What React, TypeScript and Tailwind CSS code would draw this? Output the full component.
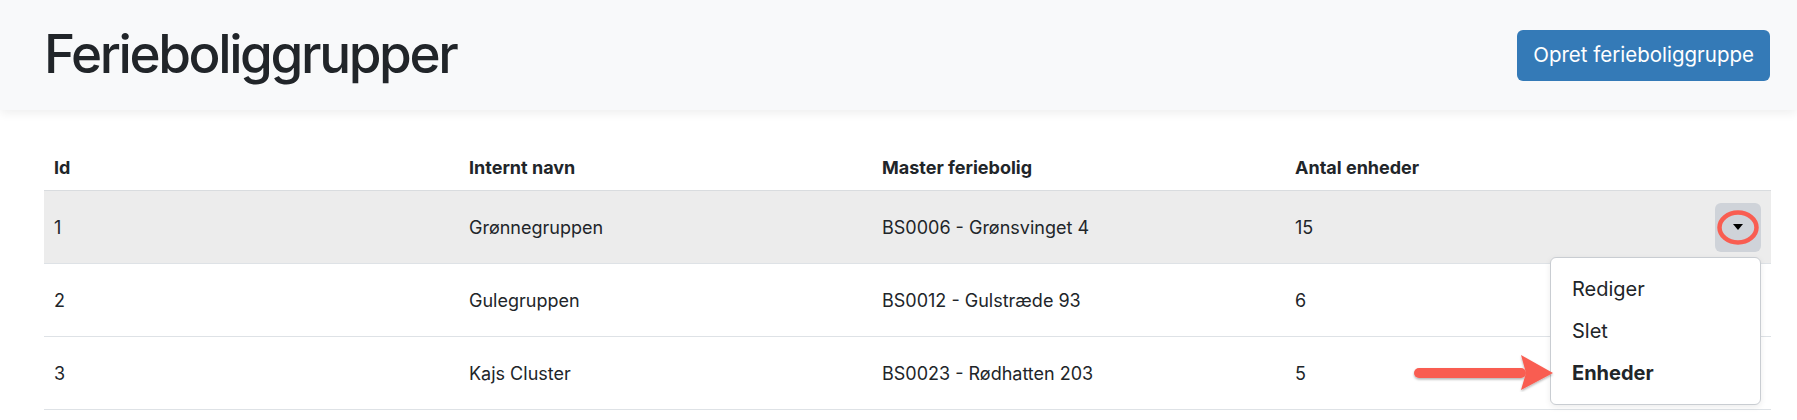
import React from "react";

const rows = [
  { id: 1, name: "Grønnegruppen", master: "BS0006 - Grønsvinget 4", count: 15 },
  { id: 2, name: "Gulegruppen", master: "BS0012 - Gulstræde 93", count: 6 },
  { id: 3, name: "Kajs Cluster", master: "BS0023 - Rødhatten 203", count: 5 },
];

const cols = "grid grid-cols-[415px_413px_413px_1fr_64px]";

function ActionMenu() {
  return (
    <div className="relative">
      <button className="relative flex h-[49px] w-[46px] items-center justify-center rounded-[6px] bg-[#cfd3d9]">
        <span className="h-0 w-0 border-x-[5px] border-t-[6px] border-x-transparent border-t-black" />
        {/* annotation ring */}
        <svg
          className="absolute left-[2px] top-[7px]"
          width="42"
          height="35"
          viewBox="0 0 42 35"
        >
          <ellipse cx="21" cy="17.5" rx="18.5" ry="15" fill="none" stroke="#f95d51" strokeWidth="4.5" />
        </svg>
      </button>
      <div className="absolute right-0 top-[54px] z-10 w-[211px] rounded-[6px] border border-[#c9cdd2] bg-white py-[10px] text-[20px] shadow-[0_2px_6px_rgba(0,0,0,0.08)]">
        <div className="flex h-[42px] items-center px-[21px]">Rediger</div>
        <div className="flex h-[42px] items-center px-[21px]">Slet</div>
        <div className="flex h-[42px] items-center px-[21px] font-bold">Enheder</div>
      </div>
    </div>
  );
}

export default function App() {
  return (
    <div className="relative min-h-[420px] overflow-hidden bg-white font-['Inter','Liberation_Sans',sans-serif] text-[#212529]">
      <header className="relative z-[1] flex h-[110px] items-center justify-between bg-[#f8f9fa] pl-[44px] pr-[27px] shadow-[0_3px_10px_rgba(0,0,0,0.07)]">
        <h1 className="text-[53px] font-medium tracking-[-0.045em]">Ferieboliggrupper</h1>
        <button className="flex h-[51px] items-center rounded-[6px] bg-[#347ab7] px-[16px] text-[20.5px] text-white">
          Opret ferieboliggruppe
        </button>
      </header>

      <main className="pl-[44px] pr-[26px] pt-[35px] text-[18px]">
        <div className={`${cols} h-[46px] items-center border-b border-[#d9dcdf] font-bold`}>
          <div className="px-[10px]">Id</div>
          <div className="px-[10px]">Internt navn</div>
          <div className="px-[10px]">Master feriebolig</div>
          <div className="px-[10px]">Antal enheder</div>
          <div />
        </div>
        {rows.map((r, i) => (
          <div
            key={r.id}
            className={`${cols} h-[73px] items-center border-b border-[#dee2e6] ${i === 0 ? "bg-[#ececec]" : ""}`}
          >
            <div className="px-[10px]">{r.id}</div>
            <div className="px-[10px]">{r.name}</div>
            <div className="px-[10px]">{r.master}</div>
            <div className="px-[10px]">{r.count}</div>
            <div className="flex justify-end pr-[10px]">{i === 0 ? <ActionMenu /> : null}</div>
          </div>
        ))}
      </main>

      {/* annotation arrow */}
      <svg
        className="absolute left-[1410px] top-[352px] z-20"
        width="146"
        height="40"
        viewBox="0 0 146 40"
      >
        <defs>
          <filter id="sh" x="-10%" y="-30%" width="120%" height="160%">
            <feDropShadow dx="0" dy="1.5" stdDeviation="1.2" floodColor="#000" floodOpacity="0.3" />
          </filter>
        </defs>
        <g filter="url(#sh)" fill="#f95d51">
          <rect x="4" y="16" width="112" height="10" rx="5" />
          <path d="M111 3 L143 21 L111 38 L116 21 Z" />
        </g>
      </svg>
    </div>
  );
}
